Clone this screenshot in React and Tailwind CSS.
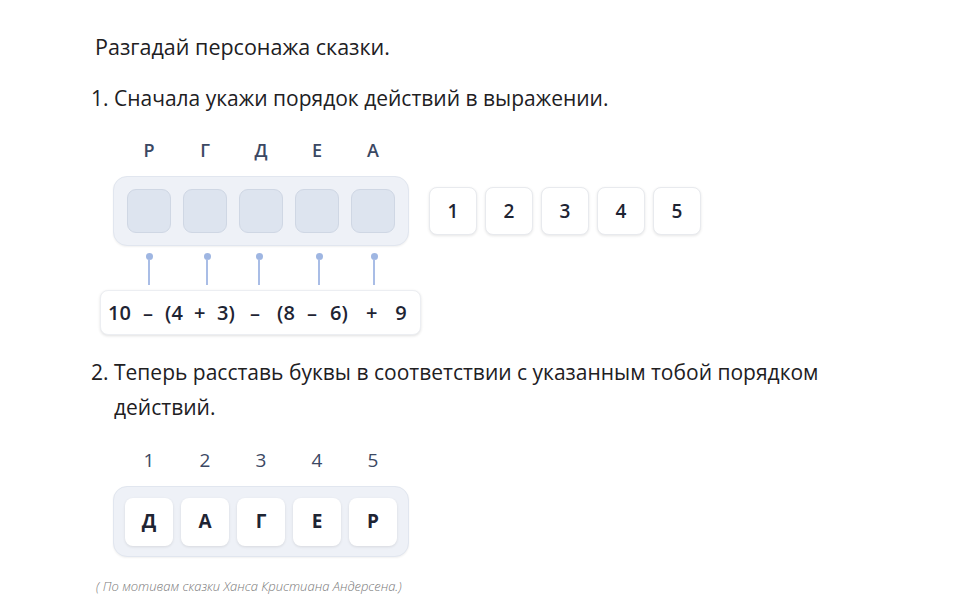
import React from "react";

const letters = ["Р", "Г", "Д", "Е", "А"];
const answer = ["Д", "А", "Г", "Е", "Р"];

// [text, start, end] in page px
const tokens = [
  ["10", 108, 130],
  ["–", 143, 153],
  ["(4", 165, 183],
  ["+", 194, 204],
  ["3)", 217, 233],
  ["–", 250, 260],
  ["(8", 277, 295],
  ["–", 307, 317],
  ["6)", 330, 346],
  ["+", 366, 376],
  ["9", 395, 407],
];

const connectorLefts = ["ml-[32px]", "ml-[50px]", "ml-[44px]", "ml-[52px]", "ml-[47px]"];

export default function App() {
  let prev = 100;
  return (
    <div
      className="w-[966px] h-[608px] bg-white text-[#21201f] overflow-hidden"
      style={{ fontFamily: '"Open Sans", "Noto Sans", sans-serif' }}
    >
      <div className="pl-[91px] pt-[33px]">
        <div className="pl-[4px] text-[21.5px] leading-[28px] font-medium">Разгадай персонажа сказки.</div>
        <div className="mt-[23px] text-[21px] leading-[28px]">1. Сначала укажи порядок действий в выражении.</div>

        {/* letters row */}
        <div className="mt-[26px] ml-[36px] flex gap-[12px] text-[18px] leading-[24px] font-semibold text-[#3b4863]">
          {letters.map((l, i) => (
            <div key={i} className="w-[44px] text-center">
              {l}
            </div>
          ))}
        </div>

        <div className="mt-[14px] ml-[22px] flex items-center">
          <div className="w-[296px] h-[70px] rounded-[14px] bg-[#eef1f7] border border-[#e1e6ef] flex items-center gap-[12px] px-[13px] shadow-[0_1px_2px_rgba(0,0,0,0.06)]">
            {letters.map((_, i) => (
              <div key={i} className="w-[44px] h-[44px] rounded-[9px] bg-[#dde4ef] border border-[#cfd7e4]" />
            ))}
          </div>
          <div className="ml-[20px] flex gap-[8px]">
            {[1, 2, 3, 4, 5].map((n) => (
              <div
                key={n}
                className="w-[48px] h-[48px] rounded-[8px] bg-white border border-[#e8eaee] shadow-[0_1px_3px_rgba(0,0,0,0.10)] flex items-center justify-center text-[19px] font-semibold text-[#1e2433]"
              >
                {n}
              </div>
            ))}
          </div>
        </div>

        {/* connectors */}
        <div className="ml-[22px] mt-[7px] flex h-[32px]">
          {connectorLefts.map((c, i) => (
            <div key={i} className={`${c} w-[8px] flex flex-col items-center`}>
              <div className="w-[7px] h-[7px] rounded-full bg-[#9fb6e2]" />
              <div className="w-[2px] h-[26px] bg-[#a9bde6] -mt-[1px]" />
            </div>
          ))}
        </div>

        <div className="ml-[9px] mt-[5px] w-[321px] h-[45px] rounded-[8px] bg-white border border-[#eceef2] shadow-[0_1px_3px_rgba(0,0,0,0.12)] flex items-center text-[20px] font-semibold text-[#1e2433]">
          {tokens.map(([t, s, e], i) => {
            const ml = s - prev;
            prev = e;
            return (
              <span
                key={i}
                className="inline-block text-center whitespace-nowrap"
                style={{ marginLeft: ml - (i === 0 ? 1 : 0), width: e - s }}
              >
                {t}
              </span>
            );
          })}
        </div>

        <div className="mt-[20px] text-[21px] leading-[35px] w-[780px]">
          2. Теперь расставь буквы в соответствии с указанным тобой порядком
          <div className="pl-[23px]">действий.</div>
        </div>

        <div className="mt-[23px] ml-[22px] flex gap-[8px] pl-[12px] text-[19px] leading-[24px] font-medium text-[#3b4863]">
          {[1, 2, 3, 4, 5].map((n) => (
            <div key={n} className="w-[48px] text-center">
              {n}
            </div>
          ))}
        </div>

        <div className="mt-[14px] ml-[22px] w-[296px] h-[71px] rounded-[14px] bg-[#eef1f7] border border-[#e1e6ef] flex items-center gap-[8px] px-[11px] shadow-[0_1px_2px_rgba(0,0,0,0.06)]">
          {answer.map((l, i) => (
            <div
              key={i}
              className="w-[48px] h-[48px] rounded-[8px] bg-white shadow-[0_1px_3px_rgba(0,0,0,0.10)] flex items-center justify-center text-[19px] font-bold text-[#1e2433]"
            >
              {l}
            </div>
          ))}
        </div>

        <div className="mt-[20px] ml-[5px] text-[13px] leading-[18px] italic font-light text-[#7a7a7a]">
          ( По мотивам сказки Ханса Кристиана Андерсена.)
        </div>
      </div>
    </div>
  );
}
